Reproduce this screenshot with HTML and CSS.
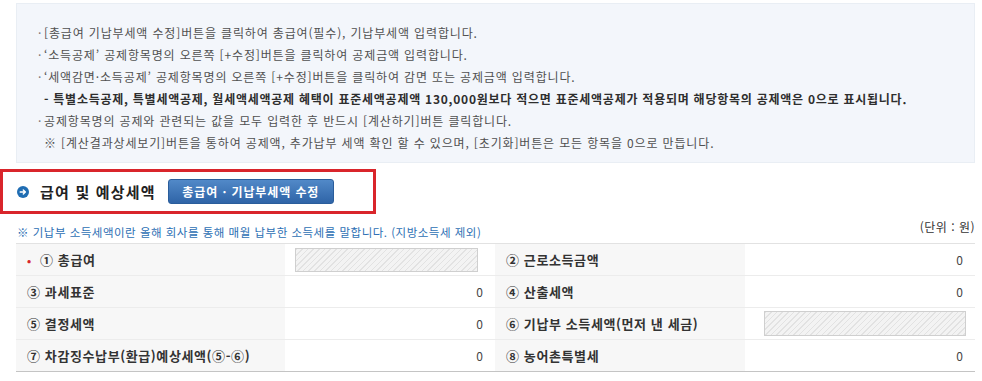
FILE: index.html
```html
<!DOCTYPE html>
<html lang="ko">
<head>
<meta charset="utf-8">
<title>급여 및 예상세액</title>
<link rel="stylesheet" href="styles.css">
</head>
<body>
<div class="guide">
  <p class="line"><span class="dot">·</span>[총급여 기납부세액 수정]버튼을 클릭하여 총급여(필수), 기납부세액 입력합니다.</p>
  <p class="line"><span class="dot">·</span>‘소득공제’ 공제항목명의 오른쪽 [+수정]버튼을 클릭하여 공제금액 입력합니다.</p>
  <p class="line"><span class="dot">·</span>‘세액감면·소득공제’ 공제항목명의 오른쪽 [+수정]버튼을 클릭하여 감면 또는 공제금액 입력합니다.</p>
  <p class="line sub strong">- 특별소득공제, 특별세액공제, 월세액세액공제 혜택이 표준세액공제액 130,000원보다 적으면 표준세액공제가 적용되며 해당항목의 공제액은 0으로 표시됩니다.</p>
  <p class="line"><span class="dot">·</span>공제항목명의 공제와 관련되는 값을 모두 입력한 후 반드시 [계산하기]버튼 클릭합니다.</p>
  <p class="line sub">※ [계산결과상세보기]버튼을 통하여 공제액, 추가납부 세액 확인 할 수 있으며, [초기화]버튼은 모든 항목을 0으로 만듭니다.</p>
</div>

<div class="section-head">
  <svg class="head-icon" width="12" height="12" viewBox="0 0 12 12" aria-hidden="true">
    <circle cx="6" cy="6" r="6" fill="#1f6db3"/>
    <path d="M3.2 6 H8.4 M6.3 3.9 L8.4 6 L6.3 8.1" fill="none" stroke="#fff" stroke-width="1.4" stroke-linecap="round" stroke-linejoin="round"/>
  </svg>
  <h2 class="head-title">급여 및 예상세액</h2>
  <button class="edit-btn" type="button">총급여 · 기납부세액 수정</button>
</div>

<div class="note-row">
  <p class="note">※ 기납부 소득세액이란 올해 회사를 통해 매월 납부한 소득세를 말합니다. (지방소득세 제외)</p>
  <p class="unit">(단위 : 원)</p>
</div>

<table class="tax-table">
  <colgroup>
    <col class="c1"><col class="c2"><col class="c3"><col class="c4">
  </colgroup>
  <tr>
    <th><span class="req">•</span>① 총급여</th>
    <td class="input-cell"><span class="field field-a"></span></td>
    <th>② 근로소득금액</th>
    <td>0</td>
  </tr>
  <tr>
    <th>③ 과세표준</th>
    <td>0</td>
    <th>④ 산출세액</th>
    <td>0</td>
  </tr>
  <tr>
    <th>⑤ 결정세액</th>
    <td>0</td>
    <th>⑥ 기납부 소득세액(먼저 낸 세금)</th>
    <td class="input-cell right"><span class="field field-b"></span></td>
  </tr>
  <tr>
    <th>⑦ 차감징수납부(환급)예상세액(⑤-⑥)</th>
    <td>0</td>
    <th>⑧ 농어촌특별세</th>
    <td>0</td>
  </tr>
</table>
</body>
</html>
```

FILE: styles.css
```css
* { box-sizing: border-box; }

body {
  margin: 0;
  background: #ffffff;
  font-family: "Noto Sans CJK KR", "Noto Sans", sans-serif;
  color: #333333;
  width: 982px;
}

p { margin: 0; }

.guide {
  margin: 3px 7px 0 16px;
  height: 160px;
  padding: 18px 0 0 21px;
  background: #f3f6fb;
  border: 1px solid #e9eef4;
}

.line {
  font-size: 12px;
  line-height: 22px;
  color: #505050;
  white-space: nowrap;
  letter-spacing: 0.85px;
}

.dot {
  display: inline-block;
  width: 6px;
  color: #777777;
  letter-spacing: 0;
}

.sub { padding-left: 6px; }

.strong {
  font-weight: 700;
  color: #2e2e2e;
  letter-spacing: 0.75px;
}

.section-head {
  display: flex;
  align-items: center;
  width: 376px;
  height: 45px;
  margin-top: 6px;
  padding-left: 14px;
  border: 3px solid #d9252b;
}

.head-icon { flex: none; }

.head-title {
  margin: 0 0 0 11px;
  font-size: 15px;
  font-weight: 700;
  color: #222222;
  letter-spacing: 1.2px;
}

.edit-btn {
  margin-left: 12px;
  width: 166px;
  height: 25px;
  padding: 0;
  border: 1px solid #2a5d9b;
  border-radius: 3px;
  background: linear-gradient(#5189c8, #2f64a7);
  color: #ffffff;
  font-family: inherit;
  font-size: 12px;
  font-weight: 700;
  letter-spacing: 0.9px;
}

.note-row {
  display: flex;
  justify-content: space-between;
  align-items: flex-end;
  height: 29px;
  padding: 0 7px 3px 17px;
}

.note {
  font-size: 11.5px;
  line-height: 16px;
  color: #2d6fb4;
  letter-spacing: 0.5px;
}

.unit {
  font-size: 12px;
  line-height: 16px;
  color: #333333;
  margin-bottom: 5px;
  letter-spacing: 0.5px;
}

.tax-table {
  margin-left: 16px;
  width: 959px;
  border-collapse: collapse;
  table-layout: fixed;
  border-top: 1px solid #e2e2e2;
  border-bottom: 1px solid #c4c4c4;
}

.c1 { width: 269px; }
.c2 { width: 210px; }
.c3 { width: 250px; }
.c4 { width: 230px; }

.tax-table tr { height: 32px; }

.tax-table th,
.tax-table td {
  border-bottom: 1px solid #ececec;
  font-size: 12px;
  line-height: 16px;
  white-space: nowrap;
}

.tax-table tr:last-child th,
.tax-table tr:last-child td { border-bottom: none; }

.tax-table th {
  background: #f7f7f7;
  text-align: left;
  font-weight: 700;
  font-size: 13px;
  letter-spacing: 0.6px;
  color: #333333;
  padding: 0 0 0 11px;
}

.tax-table td {
  text-align: right;
  color: #444444;
  padding: 0 12px 0 0;
}

.req {
  display: inline-block;
  width: 13px;
  color: #d8262c;
  font-size: 11px;
}

.tax-table td.input-cell {
  text-align: left;
  padding: 0 0 0 10px;
}

.tax-table td.input-cell.right {
  text-align: right;
  padding: 0 9px 0 0;
}

.field {
  display: inline-block;
  vertical-align: middle;
  height: 24px;
  border: 1px solid #cfcfcf;
  background-color: #efefef;
  background-image: repeating-linear-gradient(135deg, #e2e2e2 0 1px, #f3f3f3 1px 4px);
}

.field-a { width: 183px; }
.field-b { width: 202px; height: 25px; }
```
